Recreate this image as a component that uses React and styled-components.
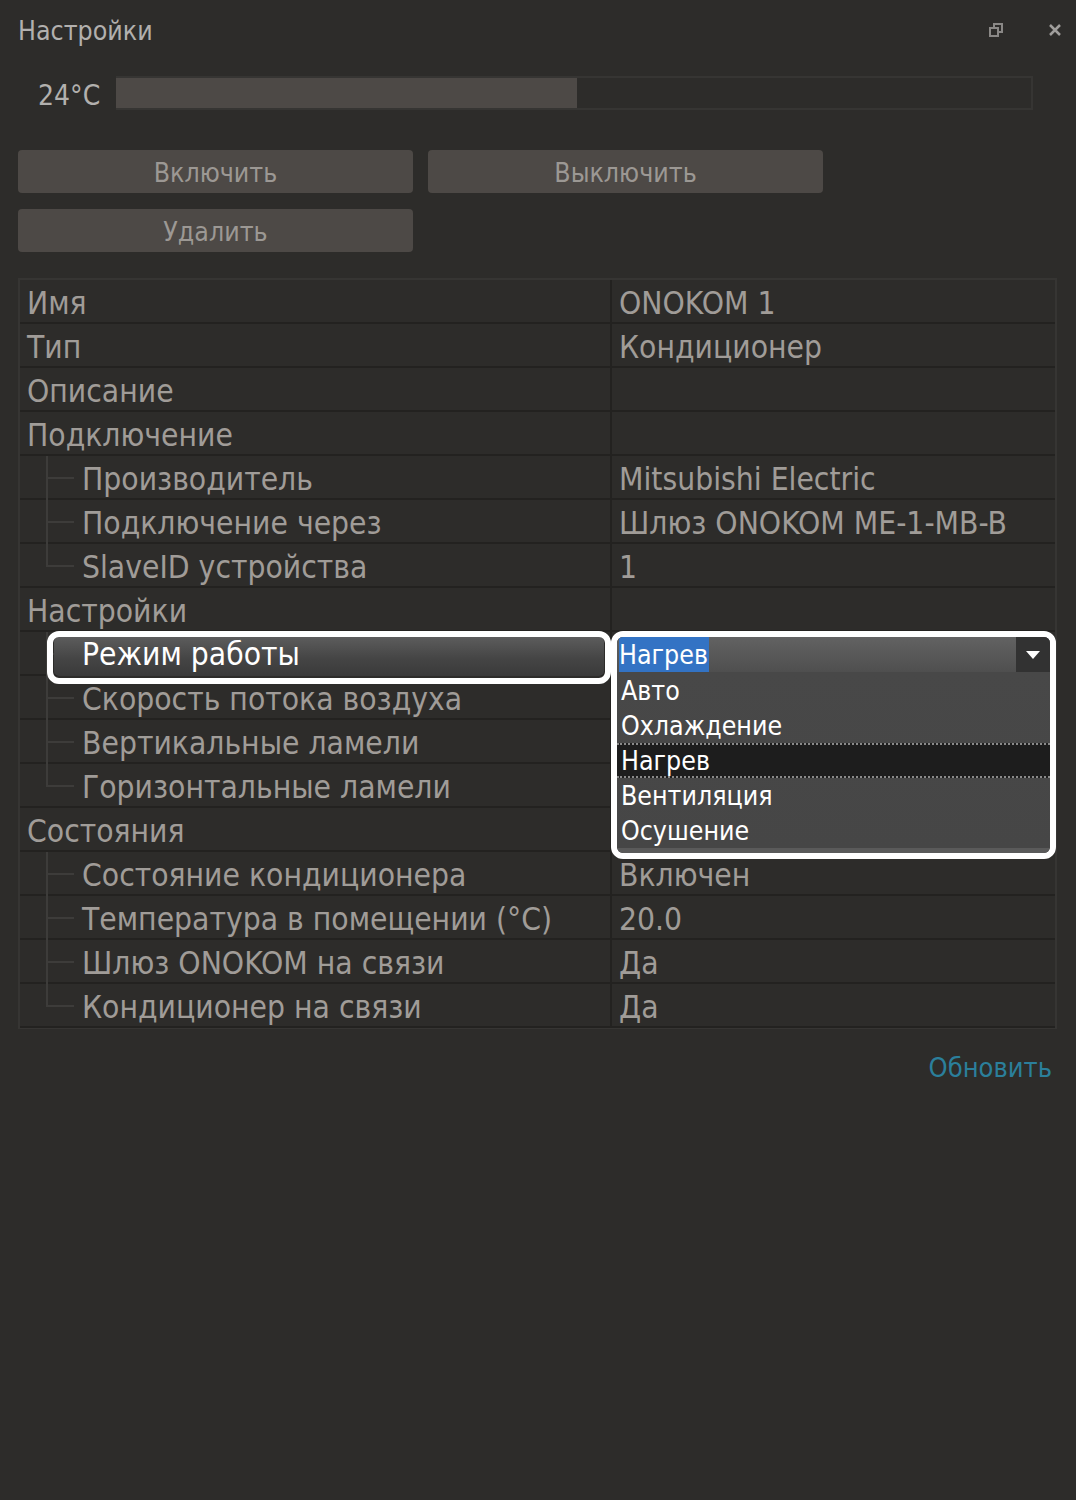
import React from "react";
import styled, { createGlobalStyle } from "styled-components";

const GlobalStyle = createGlobalStyle`
  html, body { margin: 0; padding: 0; background: #2d2c2a; }
  body { font-family: "DejaVu Sans Condensed", "DejaVu Sans", sans-serif; font-stretch: condensed; }
  * { box-sizing: border-box; }
`;

const Page = styled.div`
  width: 1076px;
  min-height: 1500px;
  background: #2d2c2a;
  padding: 0 18px 0 18px;
  display: flex;
  flex-direction: column;
`;

const Header = styled.div`
  height: 62px;
  display: flex;
  align-items: center;
  justify-content: space-between;
`;

const Title = styled.div`
  font-size: 26.5px;
  color: #b2b0ae;
  margin-top: -2px;
`;

const HeaderIcons = styled.div`
  display: flex;
  align-items: center;
  gap: 45px;
  margin-right: -4px;
  margin-top: -2px;
`;

const SliderRow = styled.div`
  display: flex;
  align-items: center;
  height: 34px;
  margin-top: 14px;
  padding-left: 20px;
  gap: 16px;
`;

const SliderLabel = styled.div`
  font-size: 28px;
  color: #b2b0ae;
  width: 62px;
  margin-top: 4px;
`;

const Track = styled.div`
  width: 917px;
  height: 34px;
  border: 2px solid #363533;
  border-left: none;
  display: flex;
`;

const Fill = styled.div`
  background: #4d4946;
  height: 100%;
`;

const ButtonGrid = styled.div`
  display: grid;
  grid-template-columns: 395px 395px;
  column-gap: 15px;
  row-gap: 16px;
  margin-top: 40px;
`;

const Button = styled.div`
  height: 43px;
  background: #4d4946;
  border-radius: 4px;
  display: flex;
  align-items: center;
  justify-content: center;
  font-size: 26.5px;
  color: #9c9894;
  padding-top: 2px;
`;

const Table = styled.div`
  margin-top: 26px;
  width: 1039px;
  border: 2px solid #363533;
  border-bottom-width: 1px;
  display: flex;
  flex-direction: column;
`;

const Row = styled.div`
  position: relative;
  display: grid;
  grid-template-columns: 592px 1fr;
  height: 44px;
  border-bottom: 2px solid #232220;
`;

const LabelCell = styled.div`
  position: relative;
  display: flex;
  align-items: center;
  padding-left: ${(p) => (p.$child ? 0 : 7)}px;
  padding-top: ${(p) => (p.$child ? 0 : 3)}px;
  font-size: 31.5px;
  color: ${(p) => (p.$active ? "#ffffff" : "#a09c98")};
  border-right: 2px solid #232220;
  white-space: nowrap;
`;

const ChildText = styled.span`
  padding-top: 3px;
`;

const ValueCell = styled.div`
  position: relative;
  display: flex;
  align-items: center;
  padding-left: 7px;
  padding-top: 3px;
  font-size: 31.5px;
  color: #a09c98;
  white-space: nowrap;
`;

const TreeGuide = styled.span`
  align-self: stretch;
  width: 28px;
  margin-left: 26px;
  margin-right: 8px;
  margin-bottom: -2px;
  flex-shrink: 0;
  background:
    linear-gradient(#3d3c3a, #3d3c3a) 0 0 / 2px ${(p) => (p.$last ? "50%" : "calc(100% + 2px)")} no-repeat,
    linear-gradient(#3d3c3a, #3d3c3a) 0 50% / 100% 2px no-repeat;
`;

const ActiveBar = styled.div`
  position: absolute;
  left: 34px;
  right: 6px;
  top: 5px;
  bottom: -2px;
  border-radius: 5px;
  background: linear-gradient(#5c5c5c, #454545 55%, #3a3a3a);
  z-index: 0;
`;

const ActiveText = styled.span`
  position: relative;
  z-index: 1;
  display: flex;
  align-items: center;
  align-self: stretch;
  padding-top: 2px;
`;

const Callout = styled.div`
  position: absolute;
  left: 27px;
  right: -1px;
  top: -1px;
  height: 53px;
  border: 6px solid #ffffff;
  border-radius: 12px;
  z-index: 2;
  pointer-events: none;
`;

const Dropdown = styled.div`
  position: absolute;
  left: -1px;
  right: -1px;
  top: -1px;
  height: 228px;
  border: 6px solid #ffffff;
  border-radius: 12px;
  background: #454545;
  z-index: 3;
  display: flex;
  flex-direction: column;
  overflow: hidden;
`;

const Combo = styled.div`
  height: 35px;
  flex-shrink: 0;
  display: flex;
  align-items: stretch;
  background: linear-gradient(#626262, #4f4f4f);
  padding-left: 2px;
`;

const ComboText = styled.span`
  background: #3373c4;
  color: #ffffff;
  font-size: 26.5px;
  display: flex;
  align-items: center;
  padding-right: 1px;
`;

const ComboSpacer = styled.span`
  flex: 1;
`;

const ArrowBox = styled.span`
  width: 34px;
  background: #323232;
  display: flex;
  align-items: center;
  justify-content: center;
`;

const List = styled.div`
  flex: 1;
  display: flex;
  flex-direction: column;
  padding-top: 1px;
  background: linear-gradient(#484848, #464646);
  border-bottom: 6px solid #5a5a5a;
`;

const Item = styled.div`
  height: 35px;
  display: flex;
  align-items: center;
  padding-left: 4px;
  font-size: 26.5px;
  color: #ffffff;
  background: ${(p) => (p.$selected ? "#1d1d1d" : "transparent")};
  border-top: 2px dotted ${(p) => (p.$selected ? "#8a8a8a" : "transparent")};
  border-bottom: 2px dotted ${(p) => (p.$selected ? "#8a8a8a" : "transparent")};
`;

const Footer = styled.div`
  display: flex;
  justify-content: flex-end;
  margin-top: 23px;
  padding-right: 6px;
`;

const Link = styled.a`
  font-size: 27px;
  color: #2b7f9b;
  text-decoration: none;
`;

const RestoreIcon = () => (
  <svg width="14" height="14" viewBox="0 0 14 14">
    <rect x="5" y="1" width="8" height="8" fill="none" stroke="#8a8886" strokeWidth="2" />
    <rect x="1" y="5" width="8" height="8" fill="#2d2c2a" stroke="#8a8886" strokeWidth="2" />
  </svg>
);

const CloseIcon = () => (
  <svg width="14" height="14" viewBox="0 0 14 14">
    <path d="M2 2 L12 12 M12 2 L2 12" stroke="#a09e9c" strokeWidth="2.5" />
  </svg>
);

const rows = [
  { label: "Имя", value: "ONOKOM 1" },
  { label: "Тип", value: "Кондиционер" },
  { label: "Описание", value: "" },
  { label: "Подключение", value: "" },
  { label: "Производитель", value: "Mitsubishi Electric", child: true },
  { label: "Подключение через", value: "Шлюз ONOKOM ME-1-MB-B", child: true },
  { label: "SlaveID устройства", value: "1", child: true, last: true },
  { label: "Настройки", value: "" },
  { label: "Режим работы", value: "", child: true, active: true },
  { label: "Скорость потока воздуха", value: "", child: true },
  { label: "Вертикальные ламели", value: "", child: true },
  { label: "Горизонтальные ламели", value: "", child: true, last: true },
  { label: "Состояния", value: "" },
  { label: "Состояние кондиционера", value: "Включен", child: true },
  { label: "Температура в помещении (°C)", value: "20.0", child: true },
  { label: "Шлюз ONOKOM на связи", value: "Да", child: true },
  { label: "Кондиционер на связи", value: "Да", child: true, last: true },
];

const options = ["Авто", "Охлаждение", "Нагрев", "Вентиляция", "Осушение"];

export default function App() {
  return (
    <>
      <GlobalStyle />
      <Page>
        <Header>
          <Title>Настройки</Title>
          <HeaderIcons>
            <RestoreIcon />
            <CloseIcon />
          </HeaderIcons>
        </Header>
        <SliderRow>
          <SliderLabel>24°C</SliderLabel>
          <Track>
            <Fill style={{ width: "461px" }} />
          </Track>
        </SliderRow>
        <ButtonGrid>
          <Button>Включить</Button>
          <Button>Выключить</Button>
          <Button>Удалить</Button>
        </ButtonGrid>
        <Table>
          {rows.map((r, i) => (
            <Row key={i}>
              <LabelCell $child={r.child} $active={r.active}>
                {r.child && <TreeGuide $last={r.last} />}
                {r.active ? (
                  <>
                    <ActiveBar />
                    <ActiveText>{r.label}</ActiveText>
                    <Callout />
                  </>
                ) : r.child ? (
                  <ChildText>{r.label}</ChildText>
                ) : (
                  r.label
                )}
              </LabelCell>
              <ValueCell>
                {r.value}
                {r.active && (
                  <Dropdown>
                    <Combo>
                      <ComboText>Нагрев</ComboText>
                      <ComboSpacer />
                      <ArrowBox>
                        <svg width="16" height="10" viewBox="0 0 16 10">
                          <path d="M1 1 L15 1 L8 9 Z" fill="#ffffff" />
                        </svg>
                      </ArrowBox>
                    </Combo>
                    <List>
                      {options.map((o) => (
                        <Item key={o} $selected={o === "Нагрев"}>
                          {o}
                        </Item>
                      ))}
                    </List>
                  </Dropdown>
                )}
              </ValueCell>
            </Row>
          ))}
        </Table>
        <Footer>
          <Link>Обновить</Link>
        </Footer>
      </Page>
    </>
  );
}
